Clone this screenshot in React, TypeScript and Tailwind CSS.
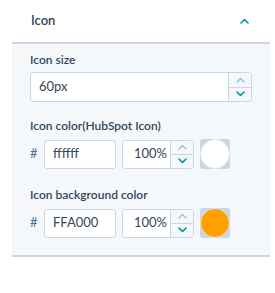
import React from 'react';

function Chevron({ up, className }: { up?: boolean; className?: string }) {
  return (
    <svg width="9" height="6" viewBox="0 0 9 6" className={className}>
      <path
        d={up ? 'M1 5 L4.5 1.5 L8 5' : 'M1 1 L4.5 4.5 L8 1'}
        fill="none"
        stroke="currentColor"
        strokeWidth="1.6"
        strokeLinecap="round"
        strokeLinejoin="round"
      />
    </svg>
  );
}

function Stepper({ upDisabled }: { upDisabled?: boolean }) {
  return (
    <div className="flex w-[23px] flex-col border-l border-[#cbd6e2] bg-[#f5f8fa]">
      <div className="flex flex-1 items-center justify-center border-b border-[#cbd6e2]">
        <Chevron up className={upDisabled ? 'text-[#b0c1d4]' : 'text-[#7fd1de]'} />
      </div>
      <div className="flex flex-1 items-center justify-center">
        <Chevron className="text-[#0091ae]" />
      </div>
    </div>
  );
}

function ColorRow({ label, hex, color }: { label: string; hex: string; color: string }) {
  return (
    <div>
      <div className="mb-[5px] text-[12px] font-semibold leading-[16px] text-[#33475b]">{label}</div>
      <div className="flex items-center">
        <span className="w-[14px] text-[13px] text-[#516f90]">#</span>
        <div className="flex h-[29px] w-[72px] items-center rounded-[3px] border border-[#cbd6e2] bg-white pl-[8px] text-[13px] text-[#33475b]">
          {hex}
        </div>
        <div className="ml-[6px] flex h-[29px] w-[72px] overflow-hidden rounded-[3px] border border-[#cbd6e2] bg-white">
          <div className="flex flex-1 items-center justify-end pr-[3px] text-[13px] text-[#33475b]">100%</div>
          <Stepper upDisabled />
        </div>
        <div className="relative ml-[6px] h-[30px] w-[30px] rounded-[3px] bg-[#cbd6e2]">
          <div
            className="absolute inset-0 rounded-full border border-[#dfe6ee]"
            style={{ backgroundColor: color }}
          />
        </div>
      </div>
    </div>
  );
}

export default function App() {
  return (
    <div
      className="h-[293px] w-[275px] bg-white pl-[12px] pr-[5px]"
      style={{ fontFamily: 'Lato, "Noto Sans", sans-serif' }}
    >
      {/* Header */}
      <div className="flex h-[44px] items-center justify-between border-b-2 border-[#cbd6e2] pl-[19px] pr-[21px]">
        <span className="text-[13px] font-semibold text-[#33475b]">Icon</span>
        <Chevron up className="text-[#0091ae]" />
      </div>

      {/* Body */}
      <div className="border-b-2 border-[#cbd6e2] bg-[#f5f8fa] px-[18px] pb-[17px] pt-[8px]">
        <div className="mb-[4px] text-[12px] font-semibold leading-[16px] text-[#33475b]">Icon size</div>
        <div className="flex h-[30px] w-[222px] overflow-hidden rounded-[3px] border border-[#cbd6e2] bg-white">
          <div className="flex flex-1 items-center pl-[8px] text-[13px] text-[#33475b]">60px</div>
          <Stepper />
        </div>

        <div className="mt-[16px]">
          <ColorRow label="Icon color(HubSpot Icon)" hex="ffffff" color="#ffffff" />
        </div>
        <div className="mt-[18px]">
          <ColorRow label="Icon background color" hex="FFA000" color="#ffa000" />
        </div>
      </div>
    </div>
  );
}
